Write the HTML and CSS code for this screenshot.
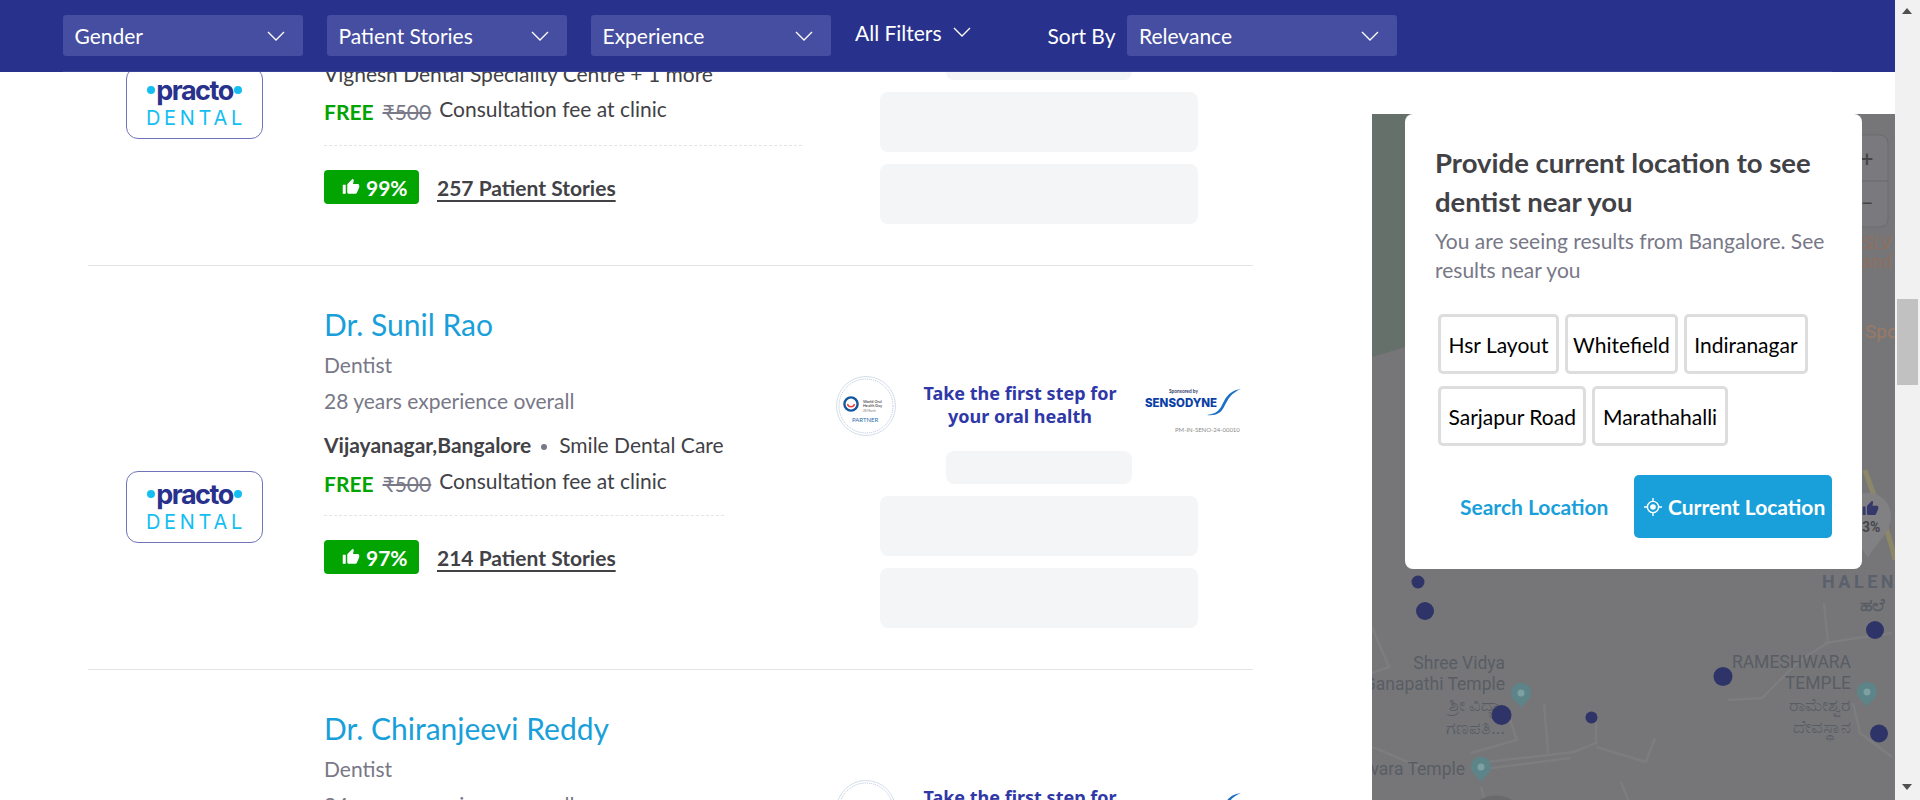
FILE: index.html
```html
<!DOCTYPE html>
<html lang="en">
  <head>
    <meta charset="UTF-8" />
    <title>Dentists in Bangalore</title>
    <link rel="stylesheet" href="styles.css">
  </head>
  <body>
    <div class="page">
      <header class="topbar">
        <div class="topbar-inner">
          <div class="select"><span>Gender</span><svg class="chev" viewBox="0 0 18 10"><path d="M1 1l8 8 8-8"/></svg></div>
          <div class="select"><span>Patient Stories</span><svg class="chev" viewBox="0 0 18 10"><path d="M1 1l8 8 8-8"/></svg></div>
          <div class="select"><span>Experience</span><svg class="chev" viewBox="0 0 18 10"><path d="M1 1l8 8 8-8"/></svg></div>
          <div class="all-filters"><span>All Filters</span><svg class="chev" viewBox="0 0 18 10"><path d="M1 1l8 8 8-8"/></svg></div>
          <div class="sort-label">Sort By</div>
          <div class="select select-wide"><span>Relevance</span><svg class="chev" viewBox="0 0 18 10"><path d="M1 1l8 8 8-8"/></svg></div>
        </div>
      </header>

      <main class="results">
        <!-- first card is scrolled up under the bar -->
        <section class="card card-first">
          <div class="logo">
            <div class="logo-top"><i></i><span>practo</span><i></i></div>
            <div class="logo-sub">DENTAL</div>
          </div>
          <div class="info">
            <div class="line">Vighesh Dental Speciality Centre + 1 more</div>
            <div class="fee"><b>FREE</b><s>₹500</s><span>Consultation fee at clinic</span></div>
            <div class="stats">
              <div class="badge"><svg viewBox="0 0 24 24"><path d="M1 21h4V9H1v12zm22-11c0-1.1-.9-2-2-2h-6.31l.95-4.57.03-.32c0-.41-.17-.79-.44-1.06L14.17 1 7.59 7.59C7.22 7.95 7 8.45 7 9v10c0 1.1.9 2 2 2h9c.83 0 1.54-.5 1.84-1.22l3.02-7.05c.09-.23.14-.47.14-.73v-2z"/></svg>99%</div>
              <a class="stories">257 Patient Stories</a>
            </div>
          </div>
          <div class="ad">
            <div class="banner"></div>
            <div class="skel skel-small"></div>
            <div class="skel"></div>
            <div class="skel"></div>
          </div>
        </section>

        <section class="card">
          <div class="logo">
            <div class="logo-top"><i></i><span>practo</span><i></i></div>
            <div class="logo-sub">DENTAL</div>
          </div>
          <div class="info">
            <h2 class="name">Dr. Sunil Rao</h2>
            <div class="line muted">Dentist</div>
            <div class="line muted">28 years experience overall</div>
            <div class="line place"><b>Vijayanagar,Bangalore</b><em></em>Smile Dental Care</div>
            <div class="fee"><b>FREE</b><s>₹500</s><span>Consultation fee at clinic</span></div>
            <div class="stats">
              <div class="badge"><svg viewBox="0 0 24 24"><path d="M1 21h4V9H1v12zm22-11c0-1.1-.9-2-2-2h-6.31l.95-4.57.03-.32c0-.41-.17-.79-.44-1.06L14.17 1 7.59 7.59C7.22 7.95 7 8.45 7 9v10c0 1.1.9 2 2 2h9c.83 0 1.54-.5 1.84-1.22l3.02-7.05c.09-.23.14-.47.14-.73v-2z"/></svg>97%</div>
              <a class="stories">214 Patient Stories</a>
            </div>
          </div>
          <div class="ad">
            <div class="banner">
              <svg class="partner" viewBox="0 0 60 60">
                <circle cx="30" cy="30" r="29.5" class="ring-a"/>
                <circle cx="30" cy="30" r="27" class="ring-b"/>
                <circle cx="15" cy="28" r="6.6" class="ring-c"/>
                <path d="M11.5 28a3.6 3.6 0 0 0 7 0" class="ring-d"/>
                <text x="27" y="26.5" class="p-t">World Oral</text>
                <text x="27" y="31" class="p-t">Health Day</text>
                <text x="27" y="35.5" class="p-s">28 March</text>
                <text x="16" y="45.5" class="p-p">PARTNER</text>
              </svg>
              <div class="banner-title">Take the first step for your oral health</div>
              <svg class="sponsor" viewBox="0 0 100 60">
                <text x="26" y="17" class="s-by">Sponsored by</text>
                <text x="2" y="31" class="s-name">SENSODYNE</text>
                <path d="M98 13C84 15 82 24 78 31 74 37 70 38 64 39 73 40 78 37 81 31 85 23 88 17 98 13z" class="s-swoosh"/>
                <text x="32" y="56" class="s-code">PM-IN-SENO-24-00010</text>
              </svg>
            </div>
            <div class="skel skel-small"></div>
            <div class="skel"></div>
            <div class="skel"></div>
          </div>
        </section>

        <section class="card">
          <div class="logo-space"></div>
          <div class="info">
            <h2 class="name">Dr. Chiranjeevi Reddy</h2>
            <div class="line muted">Dentist</div>
            <div class="line muted">24 years experience overall</div>
          </div>
          <div class="ad">
            <div class="banner">
              <svg class="partner" viewBox="0 0 60 60">
                <circle cx="30" cy="30" r="29.5" class="ring-a"/>
                <circle cx="30" cy="30" r="27" class="ring-b"/>
              </svg>
              <div class="banner-title">Take the first step for your oral health</div>
              <svg class="sponsor" viewBox="0 0 100 60">
                <path d="M98 13C84 15 82 24 78 31 74 37 70 38 64 39 73 40 78 37 81 31 85 23 88 17 98 13z" class="s-swoosh"/>
              </svg>
            </div>
          </div>
        </section>
      </main>

      <aside class="map">
        <svg class="map-art" viewBox="1372 114 523 686">
          <path d="M1372 114h60v225l-60 18z" class="m-green"/>
          <path d="M1865 470c10 30 24 60 30 90" class="m-yellow"/>
          <g class="m-road">
            <path d="M1544 703l4 50"/>
            <path d="M1596 720v23l-22 9-96 11"/>
            <path d="M1596 747l50 15 9-24"/>
            <path d="M1728 700l34-2 28-28c10-10 20-17 38-27l-4-40"/>
            <path d="M1824 643l68-10"/>
            <path d="M1853 703l7 30 32 24"/>
            <path d="M1372 627l17 40-17 6"/>
            <path d="M1510 720l7 20-46 13"/>
            <path d="M1481 787l4 13"/>
            <path d="M1621 782l7 18"/>
            <path d="M1372 747l48 20"/>
            <path d="M1476 770l95-12"/>
          </g>
          <path d="M1480 800c8-6 24-6 32 0z" class="m-smudge"/>

          <rect x="1840" y="135" width="48" height="92" rx="8" class="m-zoom"/>
          <path d="M1840 181h48" class="m-zoom-line"/>
          <text x="1867" y="167" class="m-zoom-t">+</text>
          <text x="1867" y="211" class="m-zoom-t">−</text>

          <text x="1862" y="249" class="m-poi">SLV J</text>
          <text x="1862" y="268" class="m-poi">and S</text>
          <text x="1865" y="338" class="m-poi m-poi-big">Spo</text>

          <path d="M1868 493c-14 0-25 11-25 24 0 16 18 27 25 41 7-14 23-25 23-41 0-13-9-24-23-24z" class="m-pin"/>
          <svg x="1862" y="500" width="17" height="17" viewBox="0 0 24 24" class="m-thumb"><path d="M1 21h4V9H1v12zm22-11c0-1.1-.9-2-2-2h-6.31l.95-4.57.03-.32c0-.41-.17-.79-.44-1.06L14.17 1 7.59 7.59C7.22 7.95 7 8.45 7 9v10c0 1.1.9 2 2 2h9c.83 0 1.54-.5 1.84-1.22l3.02-7.05c.09-.23.14-.47.14-.73v-2z"/></svg>
          <text x="1862" y="532" class="m-pct">3%</text>

          <text x="1822" y="588" class="m-area">HALEN</text>
          <text x="1860" y="611" class="m-label m-kn">ಹಲೆ</text>
          <text x="1505" y="669" class="m-label m-end">Shree Vidya</text>
          <text x="1505" y="690" class="m-label m-end">Ganapathi Temple</text>
          <text x="1501" y="711" class="m-label m-end">ಶ್ರೀ ವಿದ್ಯಾ</text>
          <text x="1505" y="734" class="m-label m-end">ಗಣಪತಿ...</text>
          <text x="1465" y="775" class="m-label m-end">vara Temple</text>
          <text x="1851" y="668" class="m-label m-end">RAMESHWARA</text>
          <text x="1851" y="689" class="m-label m-end">TEMPLE</text>
          <text x="1851" y="711" class="m-label m-end">ರಾಮೇಶ್ವರ</text>
          <text x="1851" y="733" class="m-label m-end">ದೇವಸ್ಥಾನ</text>

          <g class="m-temple">
            <path d="M1521 683c-6 0-10 4-10 10 0 7 7 9 10 15 3-6 10-8 10-15 0-6-4-10-10-10z"/>
            <path d="M1481 757c-6 0-10 4-10 10 0 7 7 9 10 15 3-6 10-8 10-15 0-6-4-10-10-10z"/>
            <path d="M1867 682c-6 0-10 4-10 10 0 7 7 9 10 15 3-6 10-8 10-15 0-6-4-10-10-10z"/>
          </g>
          <g class="m-temple-in">
            <circle cx="1521" cy="693" r="3.5"/>
            <circle cx="1481" cy="767" r="3.5"/>
            <circle cx="1867" cy="692" r="3.5"/>
          </g>

          <g class="m-dot">
            <circle cx="1418" cy="582" r="6.5"/>
            <circle cx="1425" cy="611" r="9"/>
            <circle cx="1501.5" cy="715" r="10"/>
            <circle cx="1591.5" cy="717.5" r="6"/>
            <circle cx="1723" cy="676.5" r="9.5"/>
            <circle cx="1875" cy="630" r="9"/>
            <circle cx="1879" cy="733.5" r="9"/>
          </g>
        </svg>

        <div class="modal">
          <h3>Provide current location to see dentist near you</h3>
          <p>You are seeing results from Bangalore. See results near you</p>
          <div class="chips">
            <span class="chip">Hsr Layout</span>
            <span class="chip chip-tight">Whitefield</span>
            <span class="chip">Indiranagar</span>
            <span class="chip">Sarjapur Road</span>
            <span class="chip">Marathahalli</span>
          </div>
          <div class="modal-actions">
            <a class="search-link">Search Location</a>
            <button class="locate-btn" type="button">
              <svg viewBox="0 0 18 18"><circle cx="9" cy="9" r="5.6"/><circle cx="9" cy="9" r="2.8" class="dot"/><path d="M9 0v3.4M9 14.6V18M0 9h3.4M14.6 9H18"/></svg>
              Current Location
            </button>
          </div>
        </div>
      </aside>
    </div>

    <div class="scrollbar">
      <div class="arrow-up"></div>
      <div class="thumb"></div>
      <div class="arrow-down"></div>
    </div>
  </body>
</html>
```

FILE: styles.css
```css
* {
  box-sizing: border-box;
}

body {
  margin: 0;
  height: 800px;
  overflow: hidden;
  display: flex;
  font-family: Lato, "Liberation Sans", sans-serif;
  font-size: 21px;
  color: #414146;
  background: #fff;
}

.page {
  position: relative;
  width: 1895px;
  height: 800px;
  overflow: hidden;
  display: flex;
  align-items: flex-start;
}

/* top filter bar */
.topbar {
  position: absolute;
  top: 0;
  left: 0;
  right: 0;
  height: 72px;
  background: #28328c;
  z-index: 5;
}

.topbar-inner {
  height: 72px;
  margin: 0 63px;
  padding-top: 15px;
  display: flex;
  align-items: flex-start;
  gap: 24px;
  color: #fff;
  border-bottom: 1px solid #3c4499;
}

.select {
  width: 240px;
  height: 41px;
  padding: 0 18px 0 11.5px;
  background: #454ea0;
  border-radius: 3px;
  display: flex;
  align-items: center;
  justify-content: space-between;
}

.select-wide {
  width: 270px;
  margin-left: -12px;
}

.chev {
  width: 18px;
  height: 10px;
  fill: none;
  stroke: #fff;
  stroke-width: 1.3;
}

.all-filters {
  display: flex;
  align-items: center;
  gap: 11px;
  height: 34px;
}

.sort-label {
  height: 41px;
  line-height: 41px;
  margin-left: 53px;
}

/* results column */
.results {
  width: 1165px;
  margin-left: 88px;
  margin-top: -138px;
  flex: none;
}

.card {
  height: 404px;
  display: flex;
  border-bottom: 1px solid #e4e4e4;
}

.logo {
  flex: none;
  width: 137px;
  height: 72px;
  margin: 205px 61px 0 38px;
  border: 1.5px solid #6f74b8;
  border-radius: 12px;
  display: flex;
  flex-direction: column;
  align-items: center;
}

.logo-space {
  flex: none;
  width: 236px;
}

.logo-top {
  display: flex;
  align-items: center;
  gap: 1px;
  height: 34px;
  margin-top: 5px;
  color: #28328c;
  font-family: Inter, Lato, sans-serif;
  font-size: 27px;
  font-weight: 700;
  letter-spacing: -1.5px;
}

.logo-top i {
  width: 8px;
  height: 8px;
  border-radius: 50%;
  background: #14bef0;
}

.logo-sub {
  color: #14bef0;
  font-family: Inter, Lato, sans-serif;
  font-size: 20px;
  line-height: 22px;
  letter-spacing: 3.7px;
  margin-right: -3px;
}

.info {
  flex: 1;
  padding-top: 41px;
}

.info > * {
  width: 400px;
}

.card-first .info {
  padding-top: 194px;
}

.card-first .info > * {
  width: 478px;
}

.card-first .line {
  margin-bottom: -1px;
}

.card-first .stats {
  margin-top: 17px;
}

.name {
  margin: 0 0 6px;
  font-size: 30px;
  font-weight: 400;
  line-height: 34px;
  color: #199fd9;
}

.line {
  height: 36px;
  line-height: 36px;
  white-space: nowrap;
}

.muted {
  color: #787887;
}

.place {
  margin-top: 8px;
}

.place b {
  font-weight: 700;
}

.place em {
  display: inline-block;
  width: 6px;
  height: 6px;
  margin: 0 12px 3px 10px;
  border-radius: 50%;
  background: #787887;
}

.fee {
  display: flex;
  align-items: center;
  height: 36px;
  margin-top: 1px;
  white-space: nowrap;
}

.fee b {
  color: #01a400;
  font-weight: 700;
  margin-top: 3px;
}

.fee s {
  margin: 3px 8px 0 9px;
  color: #787887;
}

.fee span {
  margin-bottom: 3px;
}

.stats {
  margin-top: 15px;
  padding-top: 24px;
  border-top: 1px dashed #e4e4e4;
  display: flex;
  align-items: center;
  gap: 18px;
}

.badge {
  width: 95px;
  height: 34px;
  padding-left: 18px;
  display: flex;
  align-items: center;
  gap: 6px;
  background: #01a400;
  border-radius: 4px;
  color: #fff;
  font-weight: 700;
}

.badge svg {
  width: 18px;
  height: 18px;
  fill: #fff;
}

.stories {
  font-weight: 700;
  text-decoration: underline;
  text-decoration-thickness: 2px;
  text-underline-offset: 4px;
}

/* ad block on the right of each card */
.ad {
  flex: none;
  width: 418px;
  margin-right: 5px;
  padding-top: 107px;
  display: flex;
  flex-direction: column;
  align-items: center;
  gap: 12px;
}

.banner {
  width: 418px;
  height: 64px;
  margin-bottom: 2px;
  padding-left: 6px;
  display: flex;
  align-items: center;
}

.partner {
  flex: none;
  width: 60px;
  height: 60px;
  margin-top: 2px;
}

.ring-a {
  fill: none;
  stroke: #b9c6dc;
  stroke-width: 0.6;
}

.ring-b {
  fill: none;
  stroke: #7f9cc4;
  stroke-width: 0.6;
  stroke-dasharray: 1 1;
}

.ring-c {
  fill: #fff;
  stroke: #14589c;
  stroke-width: 2.4;
}

.ring-d {
  fill: none;
  stroke: #e8413a;
  stroke-width: 1.4;
}

.p-t {
  font-size: 3.8px;
  font-weight: 700;
  fill: #555;
}

.p-s {
  font-size: 3px;
  fill: #777;
}

.p-p {
  font-size: 6px;
  fill: #2f6ca8;
}

.banner-title {
  flex: none;
  width: 200px;
  margin-left: 24px;
  font-family: "Noto Sans", sans-serif;
  font-size: 18px;
  font-weight: 700;
  line-height: 23px;
  text-align: center;
  color: #3038a8;
}

.sponsor {
  flex: none;
  width: 100px;
  height: 60px;
  margin-left: 23px;
  margin-top: 2px;
}

.s-by {
  font-size: 4.8px;
  font-weight: 700;
  fill: #333c66;
}

.s-name {
  font-family: Inter, sans-serif;
  font-size: 11.5px;
  font-weight: 800;
  fill: #0b3fa5;
}

.s-swoosh {
  fill: #1b6fc4;
}

.s-code {
  font-size: 6px;
  fill: #8a8a8a;
}

.skel {
  width: 318px;
  height: 60px;
  flex: none;
  border-radius: 8px;
  background: #f4f5f7;
}

.skel-small {
  width: 186px;
  height: 33px;
}

/* map + location prompt */
.map {
  position: relative;
  flex: none;
  width: 523px;
  height: 686px;
  margin-top: 114px;
  margin-left: 119px;
  background: #767678;
  overflow: hidden;
}

.map-art {
  display: block;
  width: 523px;
  height: 686px;
}

.m-green {
  fill: #66706a;
}

.m-yellow {
  fill: none;
  stroke: #8b8768;
  stroke-width: 5;
}

.m-road {
  fill: none;
  stroke: #7d7d80;
  stroke-width: 2.5;
}

.m-smudge {
  fill: #6a6a6c;
}

.m-zoom {
  fill: #7a797e;
  stroke: #6c6c6e;
}

.m-zoom-line {
  stroke: #68686a;
}

.m-zoom-t {
  font-family: Roboto, sans-serif;
  font-size: 22px;
  fill: #444;
  text-anchor: middle;
}

.m-poi {
  font-family: Roboto, sans-serif;
  font-size: 18px;
  fill: #8d6f62;
}

.m-poi-big {
  font-size: 19px;
  fill: #9a7a66;
}

.m-pin {
  fill: #818184;
}

.m-thumb {
  fill: #35386a;
}

.m-pct {
  font-family: Roboto, sans-serif;
  font-size: 14px;
  font-weight: 700;
  fill: #45454a;
}

.m-area {
  font-family: Roboto, sans-serif;
  font-size: 18px;
  font-weight: 700;
  letter-spacing: 3.5px;
  fill: #5b616c;
}

.m-label {
  font-family: Roboto, "Noto Sans", sans-serif;
  font-size: 17.5px;
  fill: #585d65;
}

.m-kn {
  font-weight: 700;
}

.m-end {
  text-anchor: end;
}

.m-temple {
  fill: #5d8488;
}

.m-temple-in {
  fill: #7da0a3;
}

.m-dot {
  fill: #2e3468;
}

.modal {
  position: absolute;
  left: 33px;
  top: 0;
  width: 457px;
  height: 455px;
  padding: 30px 30px 0;
  background: #fff;
  border-radius: 8px;
}

.modal h3 {
  margin: 0;
  font-size: 27.5px;
  font-weight: 700;
  line-height: 38.5px;
}

.modal p {
  margin: 5px 0 0;
  line-height: 29px;
  color: #787887;
}

.chips {
  margin-top: 30px;
  margin-left: 3px;
  width: 380px;
  display: flex;
  flex-wrap: wrap;
  gap: 12px 6px;
}

.chip {
  height: 60px;
  padding: 0 7.5px;
  display: flex;
  align-items: center;
  border: 3px solid #ddd;
  border-radius: 5px;
  color: #000;
}

.chip-tight {
  padding: 0 5px;
}

.modal-actions {
  margin-top: 29px;
  padding-left: 25px;
  display: flex;
  align-items: center;
  justify-content: space-between;
}

.search-link {
  font-weight: 700;
  color: #199fd9;
  white-space: nowrap;
}

.locate-btn {
  flex: none;
  width: 198px;
  height: 63px;
  padding: 0 0 0 10px;
  display: flex;
  align-items: center;
  gap: 6px;
  border: 0;
  border-radius: 5px;
  background: #199fd9;
  color: #fff;
  font-family: inherit;
  font-size: 21px;
  font-weight: 700;
  white-space: nowrap;
}

.locate-btn svg {
  flex: none;
  width: 18px;
  height: 18px;
  fill: none;
  stroke: #fff;
  stroke-width: 1.4;
}

.locate-btn .dot {
  fill: #fff;
  stroke: none;
}

/* browser scrollbar as in the capture */
.scrollbar {
  position: relative;
  width: 25px;
  height: 800px;
  background: #f1f1f1;
}

.thumb {
  position: absolute;
  left: 2px;
  top: 299px;
  width: 21px;
  height: 86px;
  background: #c1c1c1;
}

.arrow-up,
.arrow-down {
  position: absolute;
  left: 7px;
  width: 0;
  height: 0;
  border-left: 5.5px solid transparent;
  border-right: 5.5px solid transparent;
}

.arrow-up {
  top: 8px;
  border-bottom: 6px solid #505050;
}

.arrow-down {
  bottom: 10px;
  border-top: 6px solid #505050;
}
```
